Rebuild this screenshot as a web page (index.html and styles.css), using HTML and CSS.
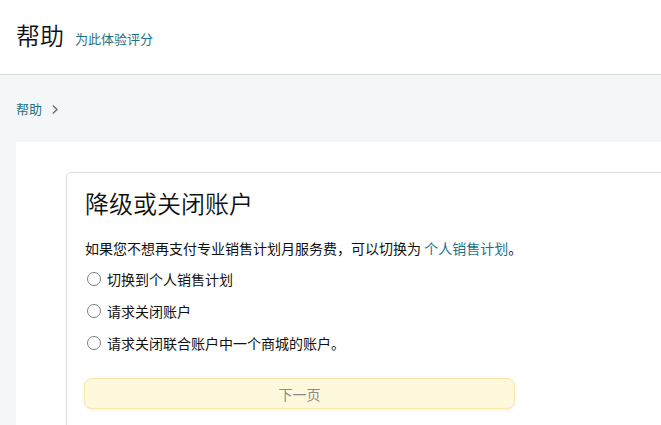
FILE: index.html
```html
<!DOCTYPE html>
<html lang="zh-CN">
<head>
<meta charset="utf-8">
<title>帮助</title>
<link rel="stylesheet" href="styles.css">
</head>
<body>
<header class="top">
  <h1 class="top-title">帮助</h1>
  <a class="top-rate" href="#">为此体验评分</a>
</header>
<main class="main">
  <nav class="crumbs">
    <a class="crumb" href="#">帮助</a>
    <svg class="chev" width="8" height="11" viewBox="0 0 8 11"><path d="M1.8 1.5 L6 5.5 L1.8 9.5" fill="none" stroke="#6f7373" stroke-width="1.5"/></svg>
  </nav>
  <section class="panel">
    <div class="card">
      <h2 class="card-title">降级或关闭账户</h2>
      <p class="intro">如果您不想再支付专业销售计划月服务费，可以切换为 <a class="link" href="#">个人销售计划</a>。</p>
      <ul class="options">
        <li class="option"><span class="radio"></span>切换到个人销售计划</li>
        <li class="option"><span class="radio"></span>请求关闭账户</li>
        <li class="option"><span class="radio"></span>请求关闭联合账户中一个商城的账户。</li>
      </ul>
      <button class="next" type="button">下一页</button>
    </div>
  </section>
</main>
</body>
</html>
```
FILE: styles.css
```css
html, body {
  margin: 0;
  padding: 0;
  overflow: hidden;
}
body {
  font-family: "Noto Sans CJK SC", "Noto Sans", sans-serif;
  color: #0f1111;
  background: #f4f7f8;
  width: 661px;
  height: 425px;
}
a { text-decoration: none; }

.top {
  background: #fff;
  border-bottom: 1px solid #d5d9d9;
  display: flex;
  align-items: center;
  padding: 0 16px;
  gap: 11px;
  box-sizing: border-box;
  height: 75px;
}
.top-title {
  margin: 0;
  font-size: 24px;
  font-weight: 350;
  color: #0f1111;
  line-height: 1;
  padding-bottom: 4px;
}
.top-rate {
  font-size: 13px;
  color: #1d7383;
  padding-top: 3px;
}

.main {
  padding: 0 0 0 16px;
}
.crumbs {
  display: flex;
  align-items: center;
  height: 67px;
  gap: 9px;
}
.crumb {
  font-size: 13px;
  color: #1d7383;
}
.chev { margin-top: 1px; }

.panel {
  background: #fff;
  padding: 30px 0 0 50px;
  overflow: hidden;
  height: 253px;
}
.card {
  width: 700px;
  border: 1px solid #dddddd;
  border-radius: 5px;
  padding: 12px 18px 30px 18px;
  background: #fff;
}
.card-title {
  margin: 0;
  font-size: 24px;
  font-weight: 350;
  line-height: 36px;
}
.intro {
  margin: 17px 0 0 0;
  font-size: 14px;
  line-height: 20px;
}
.link { color: #1d7383; }
.options {
  list-style: none;
  margin: 5px 0 0 0;
  padding: 0;
}
.option {
  display: flex;
  align-items: center;
  height: 32px;
  font-size: 14px;
  gap: 6px;
  padding-left: 2px;
}
.radio {
  width: 12px;
  height: 12px;
  border: 1px solid #7d7d7d;
  border-radius: 50%;
  box-sizing: content-box;
}
.next {
  display: block;
  margin-top: 19px;
  width: 431px;
  height: 31px;
  margin-left: -1px;
  background: #fef8dc;
  border: 1px solid #f8e7a6;
  border-radius: 8px;
  box-shadow: 0 1px 3px rgba(200, 190, 150, 0.25);
  color: #8b8b8b;
  font-family: "Noto Sans CJK SC", sans-serif;
  font-size: 14px;
  padding: 0;
}
```
